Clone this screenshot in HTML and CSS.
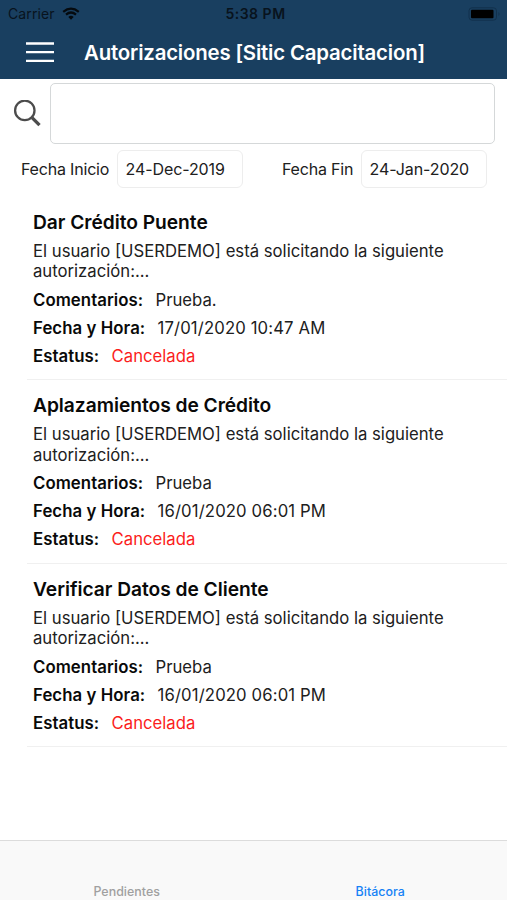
FILE: index.html
```html
<!DOCTYPE html>
<html lang="es"><head><meta charset="utf-8"><title>Autorizaciones</title><link rel="stylesheet" href="styles.css"></head>
<body>
<div class="app">
<header class="top">
<div class="status"><div class="carrier"><span class="carrier-name">Carrier</span><svg class="wifi" viewBox="0 0 18 14"><path d="M9 12.8 6.3 9.9Q9 7.7 11.7 9.9Z" fill="#050a0e"/><path d="M4 7.6Q9 3.4 14 7.6M1.2 4.8Q9-1.4 16.8 4.8" fill="none" stroke="#050a0e" stroke-width="2.2"/></svg></div><span class="clock">5:38 PM</span><svg class="battery" viewBox="0 0 33 14"><rect x="1" y=".8" width="27.5" height="12.4" rx="3" fill="none" stroke="#12314c"/><rect x="3" y="2.7" width="22.5" height="8.6" rx="1" fill="#000"/><path d="M30.5 5q2 2 0 4z" fill="#12314c"/></svg></div>
<div class="nav"><svg class="menu" viewBox="0 0 28 22"><path d="M0 1.5H28M0 10.2H28M0 18.8H28" stroke="#fff" stroke-width="2.3"/></svg><h1>Autorizaciones [Sitic Capacitacion]</h1></div>
</header>
<div class="search"><svg viewBox="0 0 28 28"><circle cx="11.8" cy="10.4" r="9.7" fill="none" stroke="#4c4c4c" stroke-width="2.3"/><path d="M19 17.7 26.5 25.2" stroke="#4c4c4c" stroke-width="3.3"/></svg><input class="query" aria-label="Buscar"></div>
<div class="dates"><span class="label start">Fecha Inicio</span><span class="date">24-Dec-2019</span><span class="label end">Fecha Fin</span><span class="date">24-Jan-2020</span></div>
<main>
<article><h2>Dar Crédito Puente</h2><p>El usuario [USERDEMO] está solicitando la siguiente<br>autorización:...</p><div class="row"><b>Comentarios:</b><span>Prueba.</span></div><div class="row"><b>Fecha y Hora:</b><span class="time">17/01/2020 10:47 AM</span></div><div class="row"><b>Estatus:</b><span class="red">Cancelada</span></div></article>
<article><h2>Aplazamientos de Crédito</h2><p>El usuario [USERDEMO] está solicitando la siguiente<br>autorización:...</p><div class="row"><b>Comentarios:</b><span>Prueba</span></div><div class="row"><b>Fecha y Hora:</b><span class="time">16/01/2020 06:01 PM</span></div><div class="row"><b>Estatus:</b><span class="red">Cancelada</span></div></article>
<article><h2>Verificar Datos de Cliente</h2><p>El usuario [USERDEMO] está solicitando la siguiente<br>autorización:...</p><div class="row"><b>Comentarios:</b><span>Prueba</span></div><div class="row"><b>Fecha y Hora:</b><span class="time">16/01/2020 06:01 PM</span></div><div class="row"><b>Estatus:</b><span class="red">Cancelada</span></div></article>
</main>
<nav class="tabs"><span>Pendientes</span><span class="active">Bitácora</span></nav>
</div>
</body></html>
```
FILE: styles.css
```css
*{box-sizing:border-box}
body{margin:0;background:#fff;font-family:Inter,sans-serif;font-size:16.7px;color:#202020}
.app{height:900px;display:flex;flex-direction:column;overflow:hidden}
.top{height:79px;background:#193f60;flex:none}
.status{height:27px;display:grid;grid-template-columns:1fr auto 1fr;align-items:center;padding:0 6px 0 8px;font-size:14px;color:#08131d}
.carrier{display:flex;align-items:center;gap:7px}
.carrier-name{letter-spacing:.1px}
.wifi{width:18px;height:14px}
.clock{font-weight:600;letter-spacing:.5px;padding-left:2px}
.battery{width:33px;height:14px;justify-self:end}
.nav{height:52px;display:flex;align-items:center;padding-left:26px}
.menu{width:28px;height:22px}
h1{margin:-2px 0 0 30px;font-size:20.4px;font-weight:570;color:#fff;white-space:nowrap;letter-spacing:-.18px}
.search{display:flex;align-items:center;height:61px;margin-top:4px;padding:0 12px 0 13px;flex:none}
.search svg{width:28px;height:28px;margin-right:9px}
.query{flex:1;height:61px;border:1px solid #d5d8d9;border-radius:5px;background:#fff;outline:0}
.dates{height:38px;margin-top:6px;display:flex;align-items:center;flex:none;font-size:16px;letter-spacing:-.19px;white-space:nowrap}
.label{display:block}
.start{width:96px;margin-left:21px}
.end{width:79px;margin-left:39px}
.date{width:126px;height:38px;border:1px solid #ededed;border-radius:6px;line-height:37px;padding-left:7.5px;letter-spacing:-.09px}
main{margin-top:8px}
article{height:183.8px;margin-left:27px;padding:13px 0 0 6px;border-bottom:1px solid #f0f0f0}
article+article{padding-top:12.7px}
h2{margin:0;font-size:19.2px;line-height:26px;font-weight:600;color:#090909;letter-spacing:-.03px}
p{margin:6px 0 4px;line-height:20.2px;white-space:nowrap}
.row{height:28px;display:flex;align-items:center;gap:12.3px;white-space:nowrap;padding-top:1px}
b{font-weight:600;color:#090909;font-size:16.8px;letter-spacing:.06px}
.time{letter-spacing:.13px}
.red{color:#fb1c20}
.tabs{margin-top:auto;height:60px;flex:none;border-top:1px solid #dcdcdc;background:#f9f9f9;display:grid;grid-template-columns:1fr 1fr;align-items:end;text-align:center;font-size:12.4px;font-weight:500;color:#a0a0a0;line-height:16px;letter-spacing:.05px}
.active{color:#1682f5}
```
